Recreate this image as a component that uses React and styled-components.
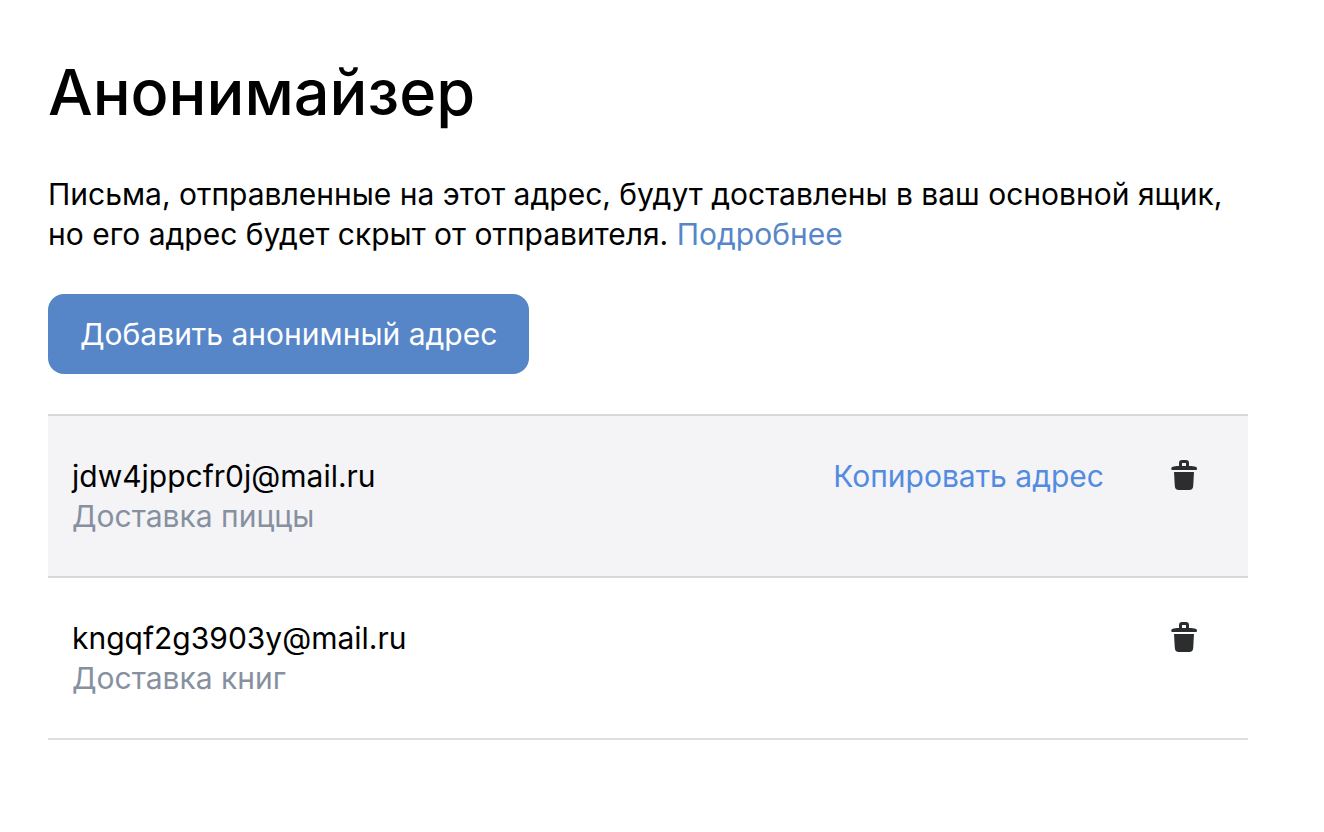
import React from "react";
import styled, { createGlobalStyle } from "styled-components";

const addresses = [
  { email: "jdw4jppcfr0j@mail.ru", comment: "Доставка пиццы", active: true },
  { email: "kngqf2g3903y@mail.ru", comment: "Доставка книг", active: false },
];

function TrashIcon() {
  return (
    <svg width="32" height="32" viewBox="0 0 32 32" aria-hidden="true">
      <path
        d="M11 6V3.200C11 1.200 12 0 14 0h4c2 0 3 1.200 3 3.200V6c3 .1 5 .3 6.500 .8c1 .3 1.500 1 1.500 1.900c0 .8-.4 1.300-1.200 1.300H4.500c-.8 0-1.200-.5-1.200-1.300c0-.9 .5-1.600 1.500-1.900C6.200 6.300 8 6.100 11 6zM14 6h4V3h-4z"
        fill="#2c2d2e"
        fillRule="evenodd"
      />
      <path
        d="M6 12h20l-.8 14c-.2 2.800-1.400 4-4 4H10.800c-2.600 0-3.800-1.200-4-4z"
        fill="#2c2d2e"
      />
    </svg>
  );
}

function App() {
  return (
    <>
      <GlobalStyle />
      <Page>
        <Title>Анонимайзер</Title>
        <Description>
          Письма, отправленные на этот адрес, будут доставлены в ваш основной
          ящик, но его адрес будет скрыт от отправителя.{" "}
          <TextLink href="#help">Подробнее</TextLink>
        </Description>
        <AddButton type="button">Добавить анонимный адрес</AddButton>
        <AddressList>
          {addresses.map((item) => (
            <AddressRow key={item.email} $active={item.active}>
              <AddressInfo>
                <Email>{item.email}</Email>
                <Comment>{item.comment}</Comment>
              </AddressInfo>
              <Actions>
                {item.active && (
                  <CopyButton type="button">Копировать адрес</CopyButton>
                )}
                <DeleteButton type="button" aria-label="Удалить адрес">
                  <TrashIcon />
                </DeleteButton>
              </Actions>
            </AddressRow>
          ))}
        </AddressList>
      </Page>
    </>
  );
}

export default App;

const GlobalStyle = createGlobalStyle`
  * {
    box-sizing: border-box;
  }
  body {
    margin: 0;
    background-color: #fff;
    color: #000;
    font-family: Inter, "Liberation Sans", sans-serif;
    font-size: 30px;
    line-height: 40px;
  }
  button {
    font: inherit;
    border: none;
    cursor: pointer;
  }
`;
const Page = styled.main`
  padding: 52px 76px 92px 48px;
`;
const Title = styled.h1`
  margin: 0 0 42px;
  font-size: 63px;
  line-height: 80px;
  font-weight: 500;
`;
const Description = styled.p`
  margin: 0 0 40px;
`;
const TextLink = styled.a`
  color: #5686c8;
  text-decoration: none;
`;
const AddButton = styled.button`
  height: 80px;
  padding: 0 32px;
  border-radius: 16px;
  background-color: #5686c8;
  color: #fff;
`;
const AddressList = styled.ul`
  margin: 40px 0 0;
  padding: 0;
  list-style: none;
  border-top: 2px solid #d8d8d8;
`;
const AddressRow = styled.li`
  display: flex;
  justify-content: space-between;
  align-items: flex-start;
  padding: 40px 48px 40px 24px;
  border-bottom: 2px solid ${(props) => (props.$active ? "#d8d8d8" : "#dedede")};
  background-color: ${(props) => (props.$active ? "#f4f4f7" : "#fff")};
`;
const AddressInfo = styled.div``;
const Email = styled.div``;
const Comment = styled.div`
  color: #87909f;
`;
const Actions = styled.div`
  display: flex;
  align-items: center;
  gap: 64px;
`;
const CopyButton = styled.button`
  padding: 0;
  background-color: transparent;
  color: #528bdf;
`;
const DeleteButton = styled.button`
  display: flex;
  align-items: center;
  height: 40px;
  padding: 0;
  background-color: transparent;
`;
